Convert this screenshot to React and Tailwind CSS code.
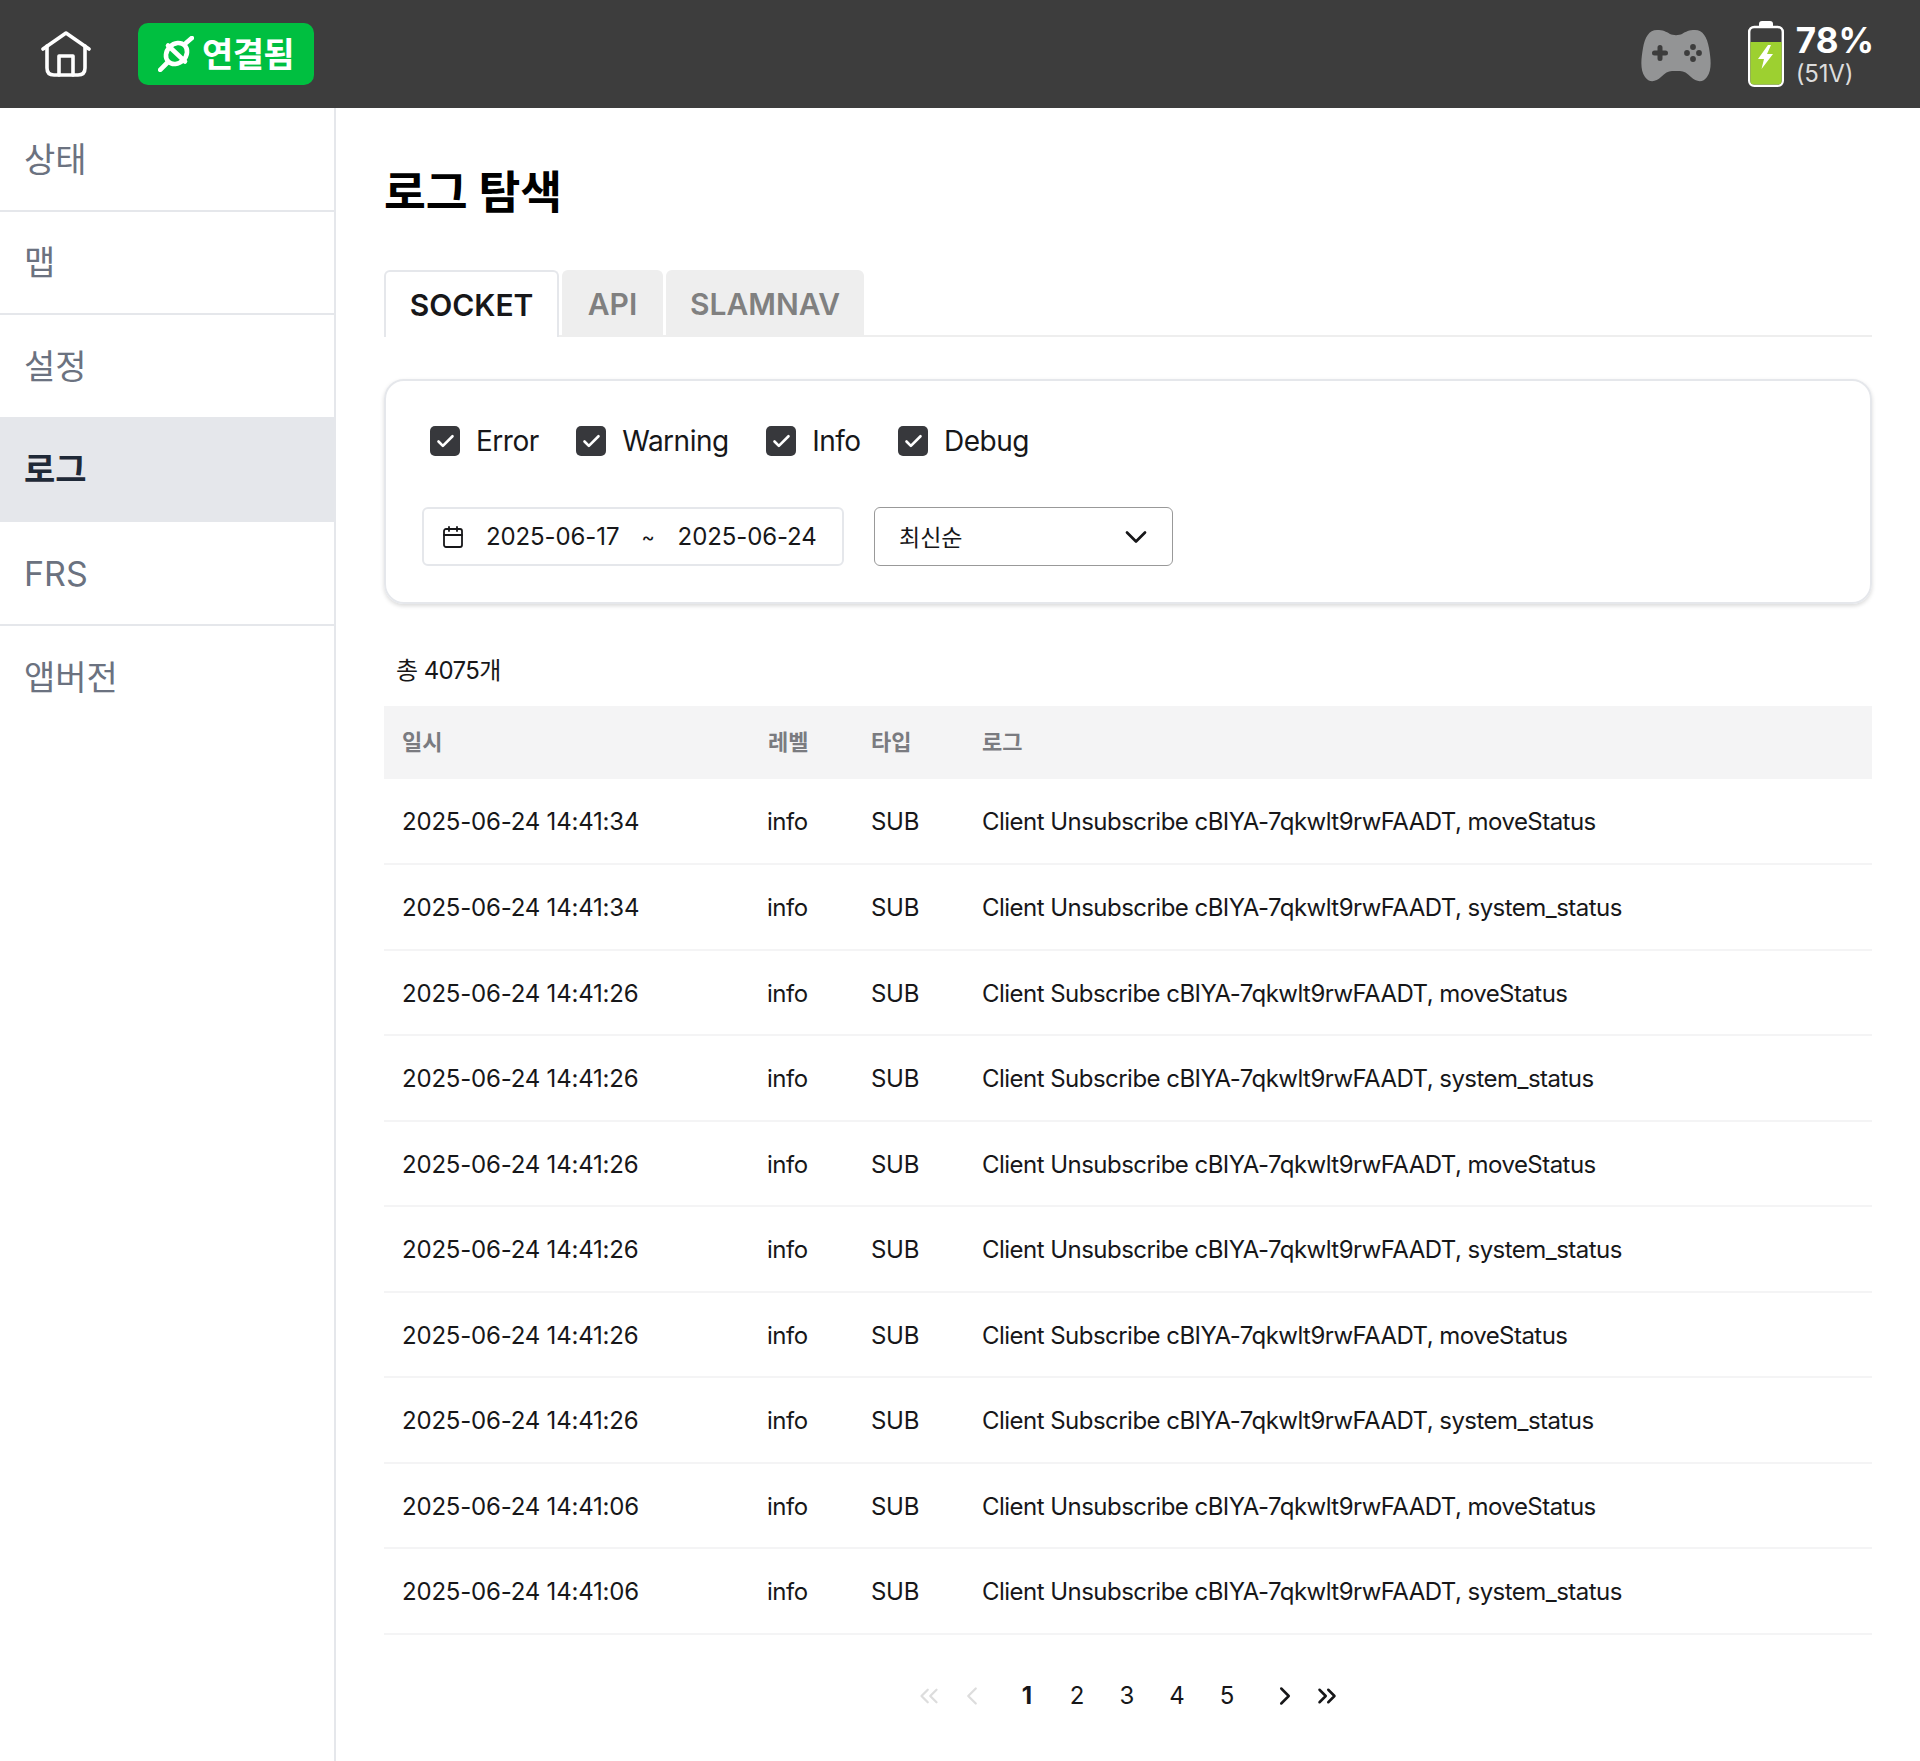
import { ChevronDown, ChevronLeft, ChevronRight, ChevronsLeft, ChevronsRight, Check, Calendar } from 'lucide-react';

const navItems = ['상태', '맵', '설정', '로그', 'FRS', '앱버전'];

const logs = [
  ['2025-06-24 14:41:34', 'Client Unsubscribe cBIYA-7qkwlt9rwFAADT, moveStatus'],
  ['2025-06-24 14:41:34', 'Client Unsubscribe cBIYA-7qkwlt9rwFAADT, system_status'],
  ['2025-06-24 14:41:26', 'Client Subscribe cBIYA-7qkwlt9rwFAADT, moveStatus'],
  ['2025-06-24 14:41:26', 'Client Subscribe cBIYA-7qkwlt9rwFAADT, system_status'],
  ['2025-06-24 14:41:26', 'Client Unsubscribe cBIYA-7qkwlt9rwFAADT, moveStatus'],
  ['2025-06-24 14:41:26', 'Client Unsubscribe cBIYA-7qkwlt9rwFAADT, system_status'],
  ['2025-06-24 14:41:26', 'Client Subscribe cBIYA-7qkwlt9rwFAADT, moveStatus'],
  ['2025-06-24 14:41:26', 'Client Subscribe cBIYA-7qkwlt9rwFAADT, system_status'],
  ['2025-06-24 14:41:06', 'Client Unsubscribe cBIYA-7qkwlt9rwFAADT, moveStatus'],
  ['2025-06-24 14:41:06', 'Client Unsubscribe cBIYA-7qkwlt9rwFAADT, system_status'],
];

function HomeIcon() {
  return (
    <svg width="50" height="46" viewBox="0 0 50 46" fill="none" stroke="white" strokeWidth="3.6" strokeLinecap="round" strokeLinejoin="round">
      <path d="M2 18 L25 2 L48 18" />
      <path d="M6 15 V37 Q6 44 13 44 H37 Q44 44 44 37 V15" />
      <path d="M18 44 V25 H32 V44" />
    </svg>
  );
}

function PlugIcon() {
  return (
    <svg width="36" height="36" viewBox="0 0 36 36" fill="none" stroke="white" strokeWidth="4.6" strokeLinecap="round">
      <ellipse cx="18.5" cy="17.5" rx="11.5" ry="9.5" transform="rotate(-45 18.5 17.5)" />
      <path d="M10 9.5 L27 25.5" />
      <path d="M2.2 33.8 L9 27" />
      <path d="M28 7 L33.8 2" />
    </svg>
  );
}

function GamepadIcon() {
  return (
    <svg width="70" height="53" viewBox="0 0 70 53">
      <path
        fill="#939495"
        d="M16 0 C22 0 25 1.5 29 4 C32 5.5 38 5.5 41 4 C45 1.5 48 0 54 0 C62 0 66 7 68 18 C70 30 71 40 66 47 C62 53 55 52 50 47 C46 43 43 41 39 41 H31 C27 41 24 43 20 47 C15 52 8 53 4 47 C-1 40 0 30 2 18 C4 7 8 0 16 0 Z"
      />
      <path stroke="#3d3d3d" strokeWidth="5" strokeLinecap="round" d="M19 17.5 V28.5 M13.5 23 H24.5" />
      <circle cx="52" cy="17" r="2.9" fill="#3d3d3d" />
      <circle cx="52" cy="29" r="2.9" fill="#3d3d3d" />
      <circle cx="46" cy="23" r="2.9" fill="#3d3d3d" />
      <circle cx="58" cy="23" r="2.9" fill="#3d3d3d" />
    </svg>
  );
}

function BatteryIcon() {
  return (
    <svg width="36" height="66" viewBox="0 0 36 66">
      <rect x="11" y="0" width="14" height="8" rx="3" fill="white" />
      <rect x="1.2" y="6" width="33.6" height="58.8" rx="5" fill="#3d3d3d" stroke="white" strokeWidth="2.4" />
      <path d="M2.4 21 H33.6 V60 a3.6 3.6 0 0 1 -3.6 3.6 H6 a3.6 3.6 0 0 1 -3.6 -3.6 Z" fill="#9dd030" />
      <path d="M20 24 L10 38 H16 L13.5 48 L25 33 H19 L23 24 Z" fill="white" />
    </svg>
  );
}

function LevelCheck({ label }) {
  return (
    <label className="flex items-center gap-[16px] text-[28px] tracking-[-0.5px] text-[#171719]">
      <span className="flex h-[30px] w-[30px] items-center justify-center rounded-[5px] bg-[#37383c]">
        <Check size={21} color="white" strokeWidth={3} />
      </span>
      {label}
    </label>
  );
}

export default function App() {
  return (
    <div className="flex min-h-screen flex-col bg-white font-['Inter','Noto_Sans_CJK_KR',sans-serif] text-[#171719]">
      {/* Top bar */}
      <header className="flex h-[108px] items-center bg-[#3d3d3d] pl-[41px] pr-[46px]">
        <HomeIcon />
        <div className="ml-[47px] flex h-[62px] w-[176px] items-center justify-center gap-[8px] rounded-[10px] bg-[#00bf40] text-[34px] font-semibold text-white">
          <PlugIcon />
          <span className="tracking-[-0.6px]">연결됨</span>
        </div>
        <div className="ml-auto flex items-center">
          <div className="mt-[4px]">
            <GamepadIcon />
          </div>
          <div className="ml-[37px]">
            <BatteryIcon />
          </div>
          <div className="ml-[12px] flex flex-col pt-[2px] text-white">
            <span className="text-[35px] font-bold leading-[36px]">78%</span>
            <span className="text-[24px] leading-[31px] tracking-[-0.2px] text-[#dcdcdc]">(51V)</span>
          </div>
        </div>
      </header>

      <div className="flex flex-1">
        {/* Sidebar */}
        <nav className="w-[336px] shrink-0 border-r-2 border-[#e5e7eb]">
          {navItems.map((item, i) => (
            <div
              key={item}
              className={`flex h-[103.5px] items-center border-[#e5e7eb] px-[24px] pt-[1px] text-[34px] ${
                i < navItems.length - 1 ? 'border-b-2' : ''
              } ${item === '로그' ? 'bg-[#e5e7eb] font-semibold text-[#1f2937]' : 'text-[#6b7280]'}`}
            >
              {item}
            </div>
          ))}
        </nav>

        <main className="min-w-0 flex-1 pl-[48px] pr-[48px]">
          <h1 className="mt-[55px] h-[60px] text-[45.5px] font-bold leading-[60px] text-black">로그 탐색</h1>

          {/* Tabs */}
          <div className="mt-[47px] flex h-[67px] gap-[3px] border-b-2 border-[#eeeeee]">
            <div className="flex h-[67px] w-[175px] items-center justify-center rounded-t-[6px] border-2 border-b-0 border-[#e5e7eb] bg-white pt-[2px] text-[30px] font-semibold">
              SOCKET
            </div>
            <div className="flex h-[65px] w-[101px] items-center justify-center rounded-t-[6px] bg-[#eeeeee] pt-[3px] text-[30px] font-semibold text-[#808080]">
              API
            </div>
            <div className="flex h-[65px] w-[198px] items-center justify-center rounded-t-[6px] bg-[#eeeeee] pt-[3px] text-[30px] font-semibold text-[#808080]">
              SLAMNAV
            </div>
          </div>

          {/* Filter card */}
          <section className="mt-[42px] h-[225px] rounded-[20px] border-2 border-[#e5e7eb] pl-[36px] pt-[39px] shadow-[0_2px_4px_rgba(0,0,0,0.15)]">
            <div className="flex gap-[37.5px] pl-[8px]">
              <LevelCheck label="Error" />
              <LevelCheck label="Warning" />
              <LevelCheck label="Info" />
              <LevelCheck label="Debug" />
            </div>
            <div className="mt-[45px] flex gap-[30px]">
              <div className="flex h-[59px] w-[422px] items-center rounded-[6px] border-2 border-[#e5e7eb] pl-[17px] pt-[1px] text-[24px] tracking-[-0.1px]">
                <Calendar size={24} strokeWidth={1.8} />
                <span className="ml-[21px]">2025-06-17</span>
                <span className="ml-[22px] text-[20px]">~</span>
                <span className="ml-[23px]">2025-06-24</span>
              </div>
              <div className="flex h-[59px] w-[299px] items-center justify-between rounded-[6px] border-[1.5px] border-[#999999] pl-[24px] pr-[18px] text-[23px]">
                <span className="pt-[3px]">최신순</span>
                <ChevronDown size={36} strokeWidth={1.8} />
              </div>
            </div>
          </section>

          <p className="mt-[52px] pl-[12px] text-[24px] leading-[30px] tracking-[-0.6px]">총 4075개</p>

          {/* Log table */}
          <table className="mt-[20px] w-full table-fixed border-collapse text-[24px]">
            <thead>
              <tr className="h-[72.5px] bg-[#f4f4f5] text-left text-[22px] text-[#7a7b80]">
                <th className="w-[366px] pl-[18px] font-bold">일시</th>
                <th className="w-[103px] pl-[18px] font-bold">레벨</th>
                <th className="w-[111px] pl-[18px] font-bold">타입</th>
                <th className="pl-[18px] font-bold">로그</th>
              </tr>
            </thead>
            <tbody>
              {logs.map(([time, message], i) => (
                <tr key={i} className="h-[85.5px] border-b-2 border-[#f4f4f5]">
                  <td className="pl-[18px] pt-[3px] tracking-[-0.2px]">{time}</td>
                  <td className="pl-[17px] pt-[3px] tracking-[-0.5px]">info</td>
                  <td className="pl-[18px] pt-[3px] tracking-[-0.3px]">SUB</td>
                  <td className="pl-[18px] pt-[3px] tracking-[-0.53px]">{message}</td>
                </tr>
              ))}
            </tbody>
          </table>

          {/* Pagination */}
          <div className="mt-[43px] flex items-center justify-center text-[24px]">
            <ChevronsLeft size={30} strokeWidth={1.8} className="text-[#dddddd]" />
            <ChevronLeft size={30} strokeWidth={1.8} className="ml-[13px] text-[#dddddd]" />
            <span className="ml-[15px] w-[50px] text-center font-bold">1</span>
            <span className="w-[50px] text-center">2</span>
            <span className="w-[50px] text-center">3</span>
            <span className="w-[50px] text-center">4</span>
            <span className="w-[50px] text-center">5</span>
            <ChevronRight size={30} strokeWidth={2} className="ml-[18px]" />
            <ChevronsRight size={30} strokeWidth={2} className="ml-[12px]" />
          </div>
        </main>
      </div>
    </div>
  );
}
